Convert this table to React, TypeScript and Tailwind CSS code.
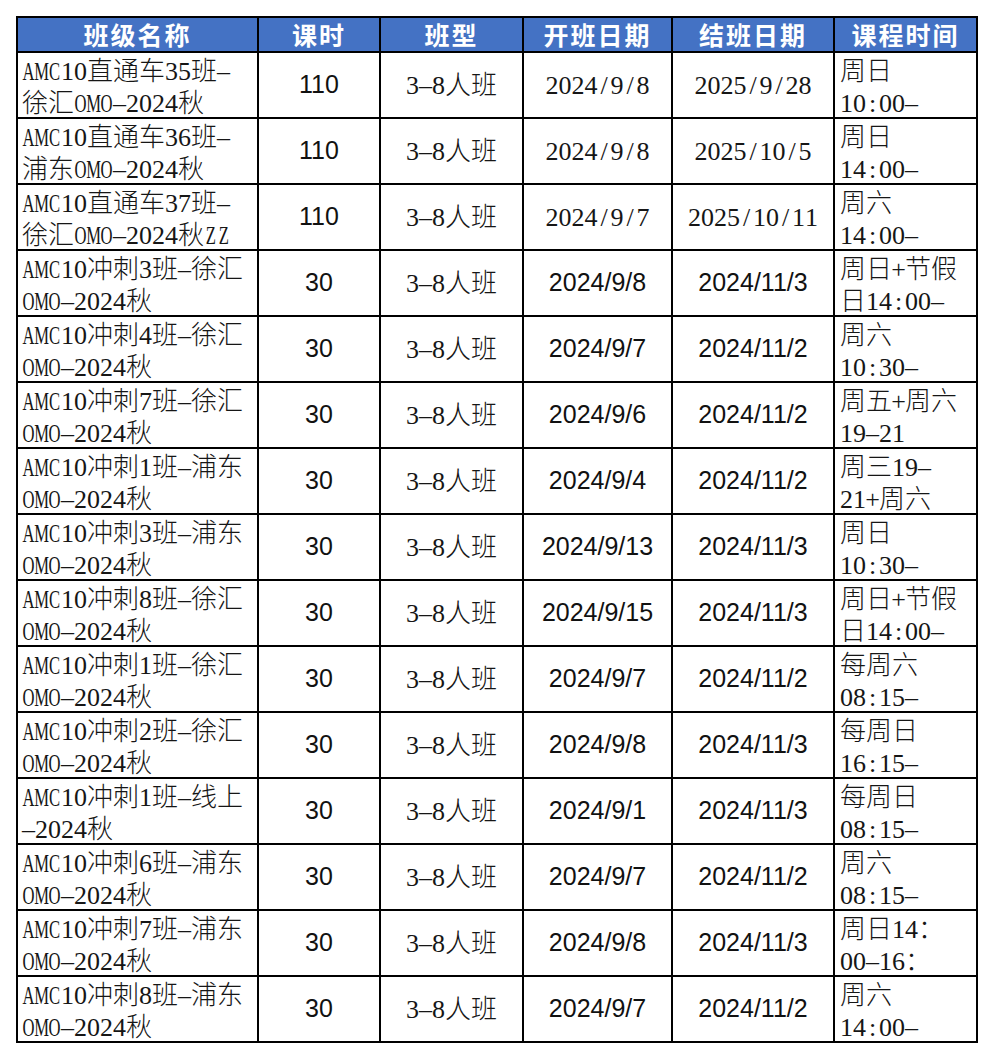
import React from "react";

type Row = {
  name: [string, string];
  hours: string;
  start: string;
  end: string;
  serifDates?: boolean;
  time: [string, string];
};

const rows: Row[] = [
  { name: ["AMC10直通车35班-", "徐汇OMO-2024秋"], hours: "110", start: "2024/9/8", end: "2025/9/28", serifDates: true, time: ["周日", "10:00-"] },
  { name: ["AMC10直通车36班-", "浦东OMO-2024秋"], hours: "110", start: "2024/9/8", end: "2025/10/5", serifDates: true, time: ["周日", "14:00-"] },
  { name: ["AMC10直通车37班-", "徐汇OMO-2024秋ZZ"], hours: "110", start: "2024/9/7", end: "2025/10/11", serifDates: true, time: ["周六", "14:00-"] },
  { name: ["AMC10冲刺3班-徐汇", "OMO-2024秋"], hours: "30", start: "2024/9/8", end: "2024/11/3", time: ["周日+节假", "日14:00-"] },
  { name: ["AMC10冲刺4班-徐汇", "OMO-2024秋"], hours: "30", start: "2024/9/7", end: "2024/11/2", time: ["周六", "10:30-"] },
  { name: ["AMC10冲刺7班-徐汇", "OMO-2024秋"], hours: "30", start: "2024/9/6", end: "2024/11/2", time: ["周五+周六", "19-21"] },
  { name: ["AMC10冲刺1班-浦东", "OMO-2024秋"], hours: "30", start: "2024/9/4", end: "2024/11/2", time: ["周三19-", "21+周六"] },
  { name: ["AMC10冲刺3班-浦东", "OMO-2024秋"], hours: "30", start: "2024/9/13", end: "2024/11/3", time: ["周日", "10:30-"] },
  { name: ["AMC10冲刺8班-徐汇", "OMO-2024秋"], hours: "30", start: "2024/9/15", end: "2024/11/3", time: ["周日+节假", "日14:00-"] },
  { name: ["AMC10冲刺1班-徐汇", "OMO-2024秋"], hours: "30", start: "2024/9/7", end: "2024/11/2", time: ["每周六", "08:15-"] },
  { name: ["AMC10冲刺2班-徐汇", "OMO-2024秋"], hours: "30", start: "2024/9/8", end: "2024/11/3", time: ["每周日", "16:15-"] },
  { name: ["AMC10冲刺1班-线上", "-2024秋"], hours: "30", start: "2024/9/1", end: "2024/11/3", time: ["每周日", "08:15-"] },
  { name: ["AMC10冲刺6班-浦东", "OMO-2024秋"], hours: "30", start: "2024/9/7", end: "2024/11/2", time: ["周六", "08:15-"] },
  { name: ["AMC10冲刺7班-浦东", "OMO-2024秋"], hours: "30", start: "2024/9/8", end: "2024/11/3", time: ["周日14：", "00-16："] },
  { name: ["AMC10冲刺8班-浦东", "OMO-2024秋"], hours: "30", start: "2024/9/7", end: "2024/11/2", time: ["周六", "14:00-"] },
];

const headers = ["班级名称", "课时", "班型", "开班日期", "结班日期", "课程时间"];

// song-ti style: every latin char sits in a half-width box, capitals squeezed
function Txt({ s }: { s: string }) {
  const out: React.ReactNode[] = [];
  let run = "";
  Array.from(s).forEach((c, i) => {
    if (c.charCodeAt(0) < 128) {
      if (run) {
        out.push(run);
        run = "";
      }
      out.push(
        <span key={i} className="inline-flex w-[0.5em] justify-center">
          {/[A-Z]/.test(c) ? (
            <span className="inline-block scale-x-[0.64]">{c}</span>
          ) : c === "-" ? (
            "–"
          ) : (
            c
          )}
        </span>
      );
    } else {
      run += c;
    }
  });
  if (run) out.push(run);
  return <>{out}</>;
}

const serif = "font-['Liberation_Serif','Noto_Sans_CJK_SC',serif] text-[26px] font-light text-[#161616]";
const sans = "font-['Liberation_Sans','Noto_Sans_CJK_SC',sans-serif] text-[25px] text-[#111]";

export default function App() {
  return (
    <div className="min-h-[1058px] bg-white pl-[16px] pt-[16px]">
      <div className="grid w-[962px] grid-cols-[239px_120px_141px_147px_160px_141px] gap-[2px] bg-black p-[2px]">
        {headers.map((h) => (
          <div
            key={h}
            className="flex h-[33px] items-center justify-center bg-[#4472c4] font-['Noto_Sans_CJK_SC',sans-serif] text-[25px] font-bold tracking-[2px] text-white"
          >
            {h}
          </div>
        ))}
        {rows.map((r, i) => (
          <React.Fragment key={i}>
            <div className={`h-[64px] overflow-hidden whitespace-nowrap bg-white pl-[4px] pt-[3px] leading-[32px] ${serif}`}>
              <div><Txt s={r.name[0]} /></div>
              <div><Txt s={r.name[1]} /></div>
            </div>
            <div className={`flex h-[64px] items-center justify-center bg-white ${sans}`}>{r.hours}</div>
            <div className={`flex h-[64px] items-center justify-center whitespace-nowrap bg-white ${serif}`}>
              <Txt s="3-8人班" />
            </div>
            <div className={`flex h-[64px] items-center justify-center whitespace-nowrap bg-white ${r.serifDates ? serif : sans}`}>
              {r.serifDates ? <Txt s={r.start} /> : r.start}
            </div>
            <div className={`flex h-[64px] items-center justify-center whitespace-nowrap bg-white ${r.serifDates ? serif : sans}`}>
              {r.serifDates ? <Txt s={r.end} /> : r.end}
            </div>
            <div className={`h-[64px] overflow-hidden whitespace-nowrap bg-white pl-[5px] pt-[3px] leading-[32px] ${serif}`}>
              <div><Txt s={r.time[0]} /></div>
              <div><Txt s={r.time[1]} /></div>
            </div>
          </React.Fragment>
        ))}
      </div>
    </div>
  );
}
